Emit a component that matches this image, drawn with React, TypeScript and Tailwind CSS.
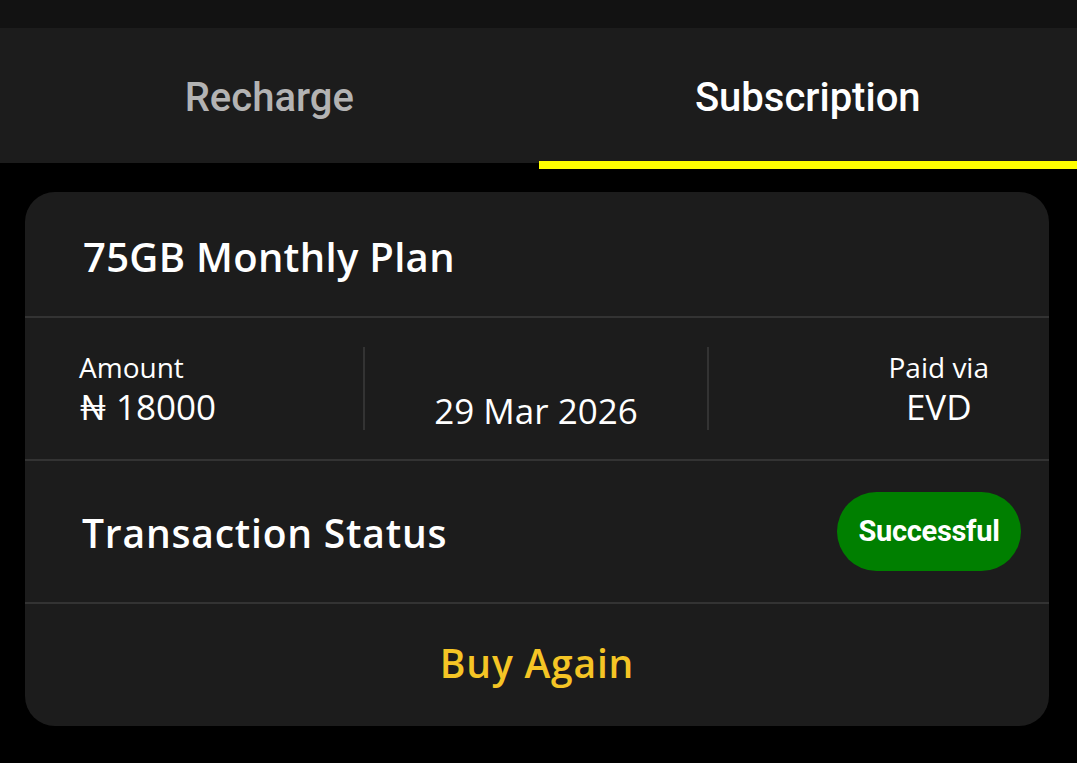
export default function App() {
  const card = "font-['Open_Sans','Lato',sans-serif]";
  return (
    <div className="w-[1077px] h-[763px] bg-black overflow-hidden">
      <div className="h-[28px] bg-[#121212]" />
      <div className="flex h-[135px] bg-[#1c1c1c] font-['Roboto',sans-serif] font-medium text-[40px]">
        <button className="flex-1 flex items-center justify-center pt-[4px] text-[#b3b3b3]">
          Recharge
        </button>
        <button className="flex-1 flex items-center justify-center pt-[4px] text-white">
          Subscription
        </button>
      </div>
      <div className="flex -mt-[2px]">
        <div className="flex-1" />
        <div className="flex-1 h-[8px] bg-[#ffff00]" />
      </div>

      <div className={`w-[1024px] ml-[25px] mt-[23px] rounded-[30px] bg-[#1c1c1c] text-white ${card}`}>
        <div className="h-[124px] flex items-center pl-[58px] pt-[6px] text-[40px] font-semibold tracking-[0.3px]">
          75GB Monthly Plan
        </div>
        <div className="h-[2px] bg-[#333]" />

        <div className="h-[141px] flex items-center">
          <div className="w-[340px] shrink-0 h-[83px] flex flex-col justify-center gap-[8px] pl-[54px] border-r-2 border-[#333]">
            <span className="text-[28px] leading-none">Amount</span>
            <span className="text-[35px] leading-none">₦ 18000</span>
          </div>
          <div className="w-[344px] shrink-0 h-[83px] flex items-end justify-center pb-[2px] border-r-2 border-[#333]">
            <span className="text-[35px] leading-none">29 Mar 2026</span>
          </div>
          <div className="flex-1 h-[83px] flex justify-end pr-[60px]">
            <div className="flex flex-col justify-center items-center gap-[8px]">
              <span className="text-[28px] leading-none">Paid via</span>
              <span className="text-[35px] leading-none">EVD</span>
            </div>
          </div>
        </div>
        <div className="h-[2px] bg-[#333]" />

        <div className="h-[141px] flex items-center justify-between pl-[57px] pr-[28px]">
          <span className="text-[39px] font-semibold tracking-[0.8px] pt-[4px]">Transaction Status</span>
          <span className="w-[184px] h-[79px] rounded-full bg-[#007f00] flex items-center justify-center font-['Roboto',sans-serif] font-bold text-[29px] tracking-[-0.3px]">
            Successful
          </span>
        </div>
        <div className="h-[2px] bg-[#333]" />

        <div className="h-[122px] flex items-center justify-center pb-[4px]">
          <span className="text-[39px] font-semibold tracking-[0.8px] text-[#f5c525]">Buy Again</span>
        </div>
      </div>
    </div>
  );
}
